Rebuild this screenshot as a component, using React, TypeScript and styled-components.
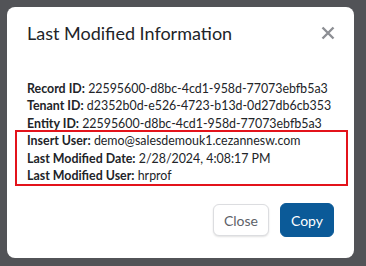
import React from 'react';
import styled, { createGlobalStyle } from 'styled-components';

const GlobalStyle = createGlobalStyle`
    html, body {
        margin: 0;
        padding: 0;
        background: #525357;
        font-family: Lato, "Noto Sans", sans-serif;
    }
`

const Backdrop = styled.div`
    width: 366px;
    height: 266px;
    box-sizing: border-box;
    padding: 7px 12px 8px 7px;
    background: #525357;
`

const Modal = styled.div`
    height: 251px;
    box-sizing: border-box;
    background: #ffffff;
    border-radius: 8px;
    display: flex;
    flex-direction: column;
    padding: 0 20px;
`

const Header = styled.div`
    display: flex;
    align-items: center;
    justify-content: space-between;
    height: 40px;
    margin-top: 6px;
`

const Title = styled.h2`
    margin: 0;
    font-size: 18px;
    font-weight: 400;
    color: #222428;
`

const CloseIcon = styled.button`
    border: none;
    background: none;
    padding: 0;
    margin-right: -1px;
    display: flex;
    color: #8d8f94;
`

const Details = styled.div`
    margin-top: 27px;
    font-size: 12.4px;
    line-height: 17.4px;
    color: #222428;
`

const Row = styled.div`
    white-space: nowrap;
`

const Label = styled.b`
    font-weight: 700;
`

const Highlight = styled.div`
    margin: -2px -14px 0 -12px;
    padding: 0 0 0 10px;
    border: 2px solid #e3131b;
`

const Footer = styled.div`
    display: flex;
    justify-content: flex-end;
    align-items: center;
    gap: 11px;
    margin-top: 17px;
`

const Button = styled.button<{ $primary?: boolean }>`
    height: ${(p) => (p.$primary ? '34px' : '32px')};
    padding: 0 10px;
    border-radius: 6px;
    font-family: Lato, "Noto Sans", sans-serif;
    font-size: 14px;
    border: 1px solid ${(p) => (p.$primary ? '#0b5a98' : '#dcdde0')};
    background: ${(p) => (p.$primary ? '#0b5a98' : '#ffffff')};
    color: ${(p) => (p.$primary ? '#ffffff' : '#5d6168')};
    box-shadow: ${(p) => (p.$primary ? 'none' : '0 1px 2px rgba(0,0,0,0.12)')};
`

const rows = [
    ['Record ID:', '22595600-d8bc-4cd1-958d-77073ebfb5a3'],
    ['Tenant ID:', 'd2352b0d-e526-4723-b13d-0d27db6cb353'],
    ['Entity ID:', '22595600-d8bc-4cd1-958d-77073ebfb5a3'],
]

const highlighted = [
    ['Insert User:', 'demo@salesdemouk1.cezannesw.com'],
    ['Last Modified Date:', '2/28/2024, 4:08:17 PM'],
    ['Last Modified User:', 'hrprof'],
]

export default function App() {
    return (
        <>
            <GlobalStyle />
            <Backdrop>
                <Modal>
                    <Header>
                        <Title>Last Modified Information</Title>
                        <CloseIcon aria-label="close">
                            <svg width="14" height="14" viewBox="0 0 14 14">
                                <path d="M1.5 1.5 L12.5 12.5 M12.5 1.5 L1.5 12.5" stroke="currentColor" strokeWidth="2.4" />
                            </svg>
                        </CloseIcon>
                    </Header>
                    <Details>
                        {rows.map(([label, value]) => (
                            <Row key={label}><Label>{label}</Label> {value}</Row>
                        ))}
                        <Highlight>
                            {highlighted.map(([label, value]) => (
                                <Row key={label}><Label>{label}</Label> {value}</Row>
                            ))}
                        </Highlight>
                    </Details>
                    <Footer>
                        <Button>Close</Button>
                        <Button $primary>Copy</Button>
                    </Footer>
                </Modal>
            </Backdrop>
        </>
    )
}
